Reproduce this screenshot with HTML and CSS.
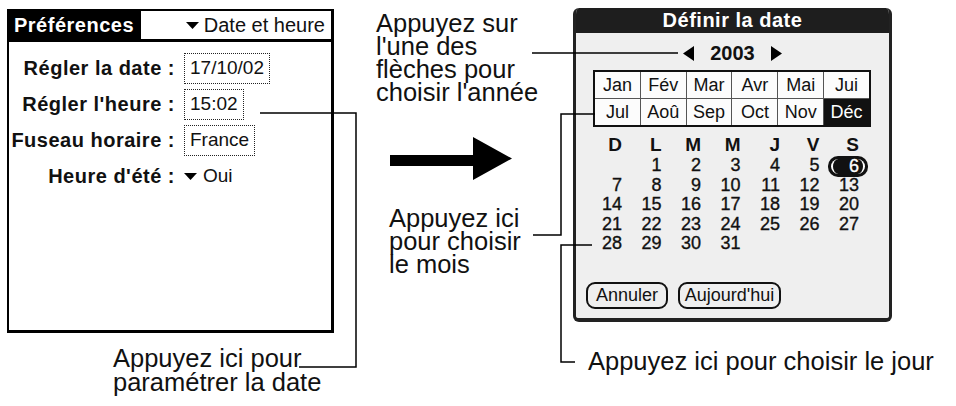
FILE: index.html
```html
<!DOCTYPE html>
<html lang="fr">
<head>
<meta charset="utf-8">
<title>Définir la date</title>
<link rel="stylesheet" href="styles.css">
</head>
<body>
<div class="page">
  <div class="col-left">
    <div class="prefs">
      <div class="prefs-head">
        <div class="prefs-tab">Préférences</div>
        <div class="prefs-cat">
          <svg class="tri-down" width="13" height="7" viewBox="0 0 13 7"><polygon points="0,0 13,0 6.5,7"/></svg>
          <span>Date et heure</span>
        </div>
      </div>
      <div class="prefs-form">
        <div class="lbl">Régler la date :</div>
        <div class="val"><span class="box">17/10/02</span></div>
        <div class="lbl">Régler l'heure :</div>
        <div class="val"><span class="box">15:02</span></div>
        <div class="lbl">Fuseau horaire :</div>
        <div class="val"><span class="box">France</span></div>
        <div class="lbl">Heure d'été :</div>
        <div class="val pick">
          <svg class="tri-down" width="13" height="7" viewBox="0 0 13 7"><polygon points="0,0 13,0 6.5,7"/></svg>
          <span>Oui</span>
        </div>
      </div>
    </div>
    <p class="caption cap-left">Appuyez ici pour<br>paramétrer la date</p>
  </div>

  <div class="col-mid">
    <p class="caption cap-year">Appuyez sur<br>l'une des<br>flèches pour<br>choisir l'année</p>
    <svg class="big-arrow" width="122" height="43" viewBox="0 0 122 43"><polygon points="0,18 83,18 83,0 122,21.5 83,43 83,29 0,29"/></svg>
    <p class="caption cap-month">Appuyez ici<br>pour choisir<br>le mois</p>
  </div>

  <div class="col-right">
    <div class="dialog">
      <div class="dlg-title">Définir la date</div>
      <div class="year-row">
        <svg width="11" height="15" viewBox="0 0 11 15"><polygon points="11,0 11,15 0,7.5"/></svg>
        <span class="year">2003</span>
        <svg width="11" height="15" viewBox="0 0 11 15"><polygon points="0,0 0,15 11,7.5"/></svg>
      </div>
      <div class="months">
        <div class="m">Jan</div><div class="m">Fév</div><div class="m">Mar</div><div class="m">Avr</div><div class="m">Mai</div><div class="m">Jui</div>
        <div class="m">Jul</div><div class="m">Aoû</div><div class="m">Sep</div><div class="m">Oct</div><div class="m">Nov</div><div class="m on">Déc</div>
      </div>
      <div class="days">
        <div class="dh">D</div><div class="dh">L</div><div class="dh">M</div><div class="dh">M</div><div class="dh">J</div><div class="dh">V</div><div class="dh">S</div>
        <div class="d"></div><div class="d">1</div><div class="d">2</div><div class="d">3</div><div class="d">4</div><div class="d">5</div><div class="d"><span class="sel">6</span></div>
        <div class="d">7</div><div class="d">8</div><div class="d">9</div><div class="d">10</div><div class="d">11</div><div class="d">12</div><div class="d">13</div>
        <div class="d">14</div><div class="d">15</div><div class="d">16</div><div class="d">17</div><div class="d">18</div><div class="d">19</div><div class="d">20</div>
        <div class="d">21</div><div class="d">22</div><div class="d">23</div><div class="d">24</div><div class="d">25</div><div class="d">26</div><div class="d">27</div>
        <div class="d">28</div><div class="d">29</div><div class="d">30</div><div class="d">31</div><div class="d"></div><div class="d"></div><div class="d"></div>
      </div>
      <div class="buttons">
        <span class="btn btn-cancel">Annuler</span>
        <span class="btn btn-today">Aujourd'hui</span>
      </div>
    </div>
    <p class="caption cap-day">Appuyez ici pour choisir le jour</p>
  </div>

  <svg class="callouts" width="956" height="406" viewBox="0 0 956 406">
    <polyline points="260,113 356,113 356,367 299,367"/>
    <polyline points="532,53 678,53"/>
    <polyline points="533,235 561,235 561,114 595,114"/>
    <polyline points="592,245 561,245 561,362 575,362"/>
  </svg>
</div>
</body>
</html>
```

FILE: styles.css
```css
html, body {
  margin: 0;
  padding: 0;
  background: #fff;
}

body {
  width: 956px;
  height: 406px;
  overflow: hidden;
  font-family: "Liberation Sans", Arial, sans-serif;
  color: #111;
}

.page {
  position: relative;
  display: flex;
  align-items: flex-start;
  box-sizing: border-box;
  height: 406px;
  padding: 9px 0 0 7px;
}

/* ---------- captions ---------- */
.caption {
  margin: 0;
  font-family: "Liberation Sans", Arial, sans-serif;
  font-size: 25.5px;
  line-height: 23px;
  color: #111;
  white-space: nowrap;
}

.cap-left {
  margin: 13px 0 0 106px;
  line-height: 24px;
}

.cap-year {
  margin-top: 3px;
}

.cap-month {
  margin: 27px 0 0 13px;
}

.cap-day {
  margin: 27px 0 0 15px;
  line-height: 24px;
}

/* ---------- left: preferences ---------- */
.col-left {
  width: 327px;
  flex: none;
}

.prefs {
  box-sizing: border-box;
  width: 327px;
  height: 324px;
  border: 2px solid #000;
  border-right-width: 3px;
  border-bottom-width: 3px;
  background: #fff;
}

.prefs-head {
  display: flex;
  height: 28px;
  border-bottom: 3px solid #000;
}

.prefs-tab {
  display: flex;
  align-items: center;
  width: 132px;
  box-sizing: border-box;
  padding-left: 5px;
  background: #000;
  color: #fff;
  font-weight: 700;
  font-size: 20px;
  letter-spacing: 0.5px;
}

.prefs-cat {
  flex: 1;
  display: flex;
  align-items: center;
  justify-content: flex-end;
  gap: 5px;
  padding-right: 6px;
  font-size: 20px;
}

.tri-down {
  display: block;
  fill: #000;
}

.prefs-form {
  display: grid;
  grid-template-columns: 166px auto;
  grid-auto-rows: 36px;
  column-gap: 9px;
  align-items: center;
  padding-top: 8px;
}

.lbl {
  text-align: right;
  font-weight: 700;
  font-size: 20px;
  letter-spacing: 0.5px;
  white-space: nowrap;
}

.val {
  display: flex;
  align-items: center;
}

.box {
  display: inline-flex;
  align-items: center;
  height: 31px;
  box-sizing: border-box;
  padding: 0 5px;
  border: 1px dotted #222;
  font-size: 19px;
}

.pick {
  gap: 6px;
  font-size: 19px;
}

/* ---------- middle ---------- */
.col-mid {
  width: 197px;
  margin-left: 42px;
  flex: none;
}

.big-arrow {
  display: block;
  margin: 33px 0 0 14px;
  fill: #000;
}

/* ---------- right: dialog ---------- */
.col-right {
  width: 319px;
  flex: none;
  margin-top: -1px;
}

.dialog {
  box-sizing: border-box;
  width: 319px;
  height: 314px;
  display: flex;
  flex-direction: column;
  background: #efefef;
  border: 3px solid #222;
  border-top: 0;
  border-bottom-width: 4px;
  border-radius: 6px;
  overflow: hidden;
}

.dlg-title {
  height: 25px;
  margin: 0 -3px;
  background: #1e1e1e;
  color: #fff;
  font-weight: 700;
  font-size: 20px;
  letter-spacing: 0.5px;
  line-height: 25px;
  text-align: center;
  border-radius: 6px 6px 0 0;
}

.year-row {
  display: flex;
  align-items: center;
  justify-content: center;
  gap: 16px;
  height: 22px;
  margin-top: 9px;
}

.year-row svg {
  display: block;
  fill: #000;
}

.year {
  font-weight: 700;
  font-size: 20px;
}

.months {
  display: grid;
  grid-template-columns: repeat(6, 1fr);
  grid-template-rows: 26px 26px;
  gap: 1px;
  width: 278px;
  height: 57px;
  box-sizing: border-box;
  margin: 6px 0 0 17px;
  border: 2px solid #111;
  background: #555;
}

.m {
  display: flex;
  align-items: center;
  justify-content: center;
  background: #fcfcfc;
  font-size: 18px;
  color: #111;
}

.m.on {
  background: #111;
  color: #fff;
}

.days {
  display: grid;
  grid-template-columns: repeat(7, 39.5px);
  grid-template-rows: 22px repeat(5, 19.5px);
  margin: 7px 0 0 6.5px;
}

.dh {
  text-align: right;
  font-weight: 700;
  font-size: 19px;
  line-height: 22px;
}

.d {
  text-align: right;
  font-size: 18px;
  line-height: 19.5px;
  -webkit-text-stroke: 0.35px #111;
}

.sel {
  position: relative;
  display: inline-block;
  height: 21px;
  line-height: 21px;
  padding: 0 9px 0 21px;
  margin-right: -9px;
  background: #111;
  color: #fff;
  -webkit-text-stroke: 0.35px #fff;
  border-radius: 10px;
  vertical-align: top;
}

.sel::before {
  content: "";
  position: absolute;
  top: 3px;
  bottom: 3px;
  left: 3px;
  right: 3px;
  border-left: 2px solid #fff;
  border-right: 2px solid #fff;
  border-radius: 8px;
}

.buttons {
  display: flex;
  gap: 10px;
  margin: auto 0 9px 10px;
}

.btn {
  display: inline-flex;
  align-items: center;
  justify-content: center;
  box-sizing: border-box;
  height: 27px;
  border: 2px solid #111;
  border-radius: 9px;
  font-size: 18px;
  color: #111;
}

.btn-cancel {
  width: 82px;
}

.btn-today {
  width: 103px;
}

/* ---------- callout lines ---------- */
.callouts {
  position: absolute;
  left: 0;
  top: 0;
  pointer-events: none;
}

.callouts polyline {
  fill: none;
  stroke: #000;
  stroke-width: 1.5;
}
```
